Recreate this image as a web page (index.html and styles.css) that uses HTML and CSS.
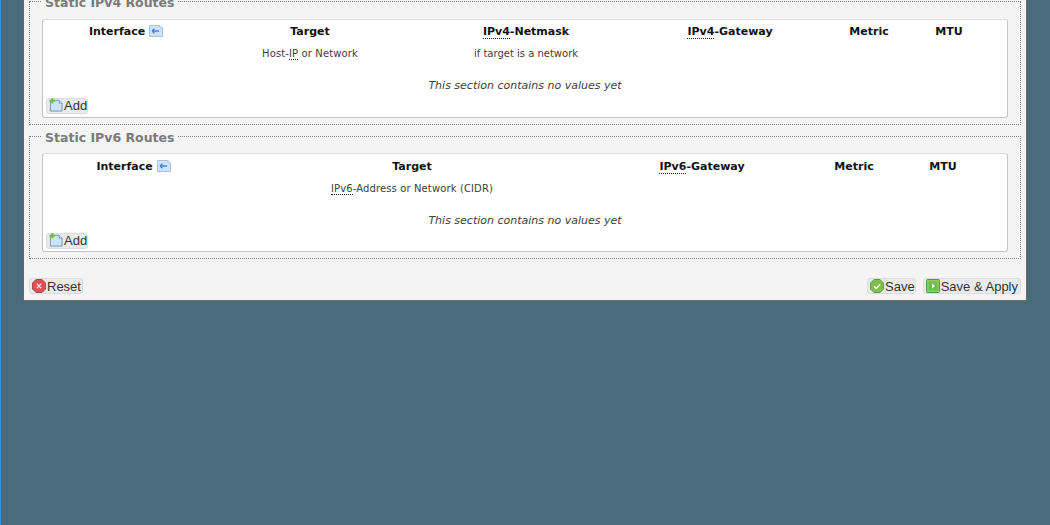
FILE: index.html
```html
<!DOCTYPE html>
<html lang="en">
<head>
<meta charset="utf-8">
<title>Static Routes</title>
<link rel="stylesheet" href="styles.css">
</head>
<body>
<main class="panel">
  <fieldset class="section section-v4">
    <legend>Static IPv4 Routes</legend>
    <div class="box">
      <div class="grid grid-v4">
        <div class="th"><span>Interface</span>
          <svg class="ico-back" viewBox="0 0 14 12"><path d="M.5.5h10.500l2.500 2.500v8.500h-13z" fill="#cfe2f7" stroke="#a9c3de"/><path d="M11 .5v2.500h2.500" fill="#fff" stroke="#a9c3de"/><path d="M3 6h7M3 6l2.500-2.200M3 6l2.500 2.200" fill="none" stroke="#3f86d6" stroke-width="1.300"/></svg>
        </div>
        <div class="th">Target</div>
        <div class="th"><abbr>IPv4</abbr>-Netmask</div>
        <div class="th"><abbr>IPv4</abbr>-Gateway</div>
        <div class="th">Metric</div>
        <div class="th">MTU</div>
        <div class="td"></div>
        <div class="td td-wide">Host-<abbr>IP</abbr> or Network</div>
        <div class="td">if target is a network</div>
        <div class="td"></div><div class="td"></div><div class="td"></div>
      </div>
      <p class="empty">This section contains no values yet</p>
      <button class="btn btn-add" type="button">
        <svg class="ico" viewBox="0 0 15 15"><path d="M1.500 2.500h9.500l3 3v8.500h-12.500z" fill="#cde3f6" stroke="#6f93b5"/><path d="M11 2.500v3h3" fill="#eef6fd" stroke="#6f93b5"/><path d="M3.500 0v6M.5 3h6" stroke="#6cc23a" stroke-width="2"/></svg>Add</button>
    </div>
  </fieldset>
  <fieldset class="section section-v6">
    <legend>Static IPv6 Routes</legend>
    <div class="box">
      <div class="grid grid-v6">
        <div class="th"><span>Interface</span>
          <svg class="ico-back" viewBox="0 0 14 12"><path d="M.5.5h10.500l2.500 2.500v8.500h-13z" fill="#cfe2f7" stroke="#a9c3de"/><path d="M11 .5v2.500h2.500" fill="#fff" stroke="#a9c3de"/><path d="M3 6h7M3 6l2.500-2.200M3 6l2.500 2.200" fill="none" stroke="#3f86d6" stroke-width="1.300"/></svg>
        </div>
        <div class="th">Target</div>
        <div class="th"><abbr>IPv6</abbr>-Gateway</div>
        <div class="th">Metric</div>
        <div class="th">MTU</div>
        <div class="td"></div>
        <div class="td td-wide"><abbr>IPv6</abbr>-Address or Network (CIDR)</div>
        <div class="td"></div><div class="td"></div><div class="td"></div>
      </div>
      <p class="empty">This section contains no values yet</p>
      <button class="btn btn-add" type="button">
        <svg class="ico" viewBox="0 0 15 15"><path d="M1.500 2.500h9.500l3 3v8.500h-12.500z" fill="#cde3f6" stroke="#6f93b5"/><path d="M11 2.500v3h3" fill="#eef6fd" stroke="#6f93b5"/><path d="M3.500 0v6M.5 3h6" stroke="#6cc23a" stroke-width="2"/></svg>Add</button>
    </div>
  </fieldset>
  <div class="actions">
    <button class="btn btn-reset" type="button">
      <svg class="ico" viewBox="0 0 14 14"><path d="M4 .5h6L13.500 4v6L10 13.500H4L.5 10V4z" fill="#dd4f55" stroke="#b5474c"/><path d="M4.800 4.800l4.400 4.400M9.200 4.800l-4.400 4.400" stroke="#fbdcdc" stroke-width="1.300"/></svg>Reset</button>
    <div class="actions-right">
      <button class="btn btn-save" type="button">
        <svg class="ico" viewBox="0 0 14 14"><path d="M4 .5h6L13.500 4v6L10 13.500H4L.5 10V4z" fill="#7fc04c" stroke="#5f9c49"/><path d="M4 7.200l2.200 2.200 3.800-4" fill="none" stroke="#f2fbe8" stroke-width="1.500"/></svg>Save</button>
      <button class="btn" type="button">
        <svg class="ico" viewBox="0 0 14 14"><rect x=".5" y=".5" width="13" height="13" rx="1" fill="#8ccc5a" stroke="#4f9a45"/><rect x="2.500" y="2.500" width="9" height="9" fill="#6fbd4f"/><path d="M6 4.500l3 2.500-3 2.500z" fill="#f2fbe8"/></svg>Save &amp; Apply</button>
    </div>
  </div>
</main>
</body>
</html>
```
FILE: styles.css
```css
* { box-sizing: border-box; }
html, body { height: 100%; }
body {
  margin: 0;
  height: 525px;
  overflow: hidden;
  background: #4a6b7c;
  border-left: 1px solid #3a90dc;
  font-family: "DejaVu Sans", sans-serif;
  font-size: 10px;
  color: #404040;
}
.panel {
  width: 1004px;
  height: 301px;
  margin-left: 22px;
  background: #f4f4f4;
  border-left: 1px solid #6a6a6a;
  border-right: 1px solid #6a6a6a;
  border-bottom: 1px solid #6a6a6a;
  padding: 0 5px;
  overflow: hidden;
}
.section {
  margin: 0;
  min-width: 0;
  padding: 0 12px;
  border: 1px dotted #7d7d7d;
  background: #f4f4f4;
}
.section-v4 { margin-top: -9px; height: 134px; padding-top: 8px; }
.section-v6 { margin-top: 1px; height: 133px; padding-top: 7px; }
legend {
  margin-left: 0;
  padding: 4px 3px 0;
  font-size: 12.5px;
  line-height: 16px;
  font-weight: bold;
  color: #7a7a7a;
}
.box {
  height: 99px;
  background: #fff;
  border: 1px solid #c4c4c4;
  border-top-color: #dcdcdc;
  border-radius: 3px;
  padding-top: 3px;
  position: relative;
}
.section-v6 .box { padding-top: 4px; }
.grid { display: grid; grid-auto-rows: auto; }
.grid-v4 { grid-template-columns: 166px 202px 230px 178px 100px 60px; }
.grid-v6 { grid-template-columns: 181px 376px 204px 100px 78px; }
.th {
  height: 18px;
  text-align: center;
  font-size: 11px;
  line-height: 18px;
  font-weight: bold;
  color: #111;
  white-space: nowrap;
}
.td {
  height: 26px;
  text-align: center;
  font-size: 10px;
  line-height: 26px;
  color: #404040;
  white-space: nowrap;
}
.td-wide { letter-spacing: .12px; }
abbr { border-bottom: 1px dotted #222; }
.ico-back { width: 14px; height: 12px; vertical-align: -2px; }
.empty {
  margin: 0;
  text-align: center;
  font-style: italic;
  font-size: 11px;
  line-height: 14px;
  padding-top: 12px;
  color: #404040;
}
.btn {
  display: inline-flex;
  align-items: center;
  height: 16px;
  padding: 0 2px;
  background: #eaeaea;
  border: 1px solid #dcdcdc;
  border-radius: 3px;
  font-family: "Liberation Sans", sans-serif;
  font-size: 13px;
  color: #333;
}
.btn-add {
  position: absolute;
  left: 3px;
  bottom: 2px;
  padding-right: 0;
  padding-bottom: 2px;
}
.section-v4 .btn-add { bottom: 3px; }
.btn-reset { padding-right: 1px; }
.btn-save { padding-right: 0; }
.ico { width: 14px; height: 14px; flex: none; margin-right: 1px; }
.actions {
  display: flex;
  justify-content: space-between;
  align-items: center;
  padding-top: 19px;
}
.actions-right { display: flex; gap: 7px; }
```
